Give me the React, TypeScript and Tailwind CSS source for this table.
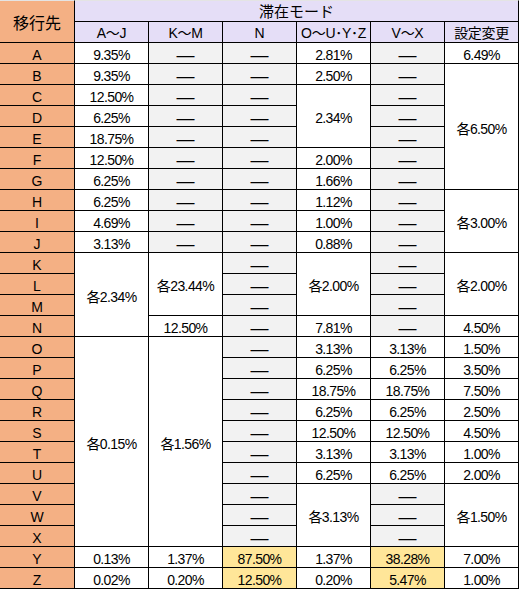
import React from 'react';

type Cell = { text: string; span?: number; tone?: 'dash' | 'hot' };

const DASH: Cell = { text: '—', tone: 'dash' };
const dashes = (n: number): Cell[] => Array.from({ length: n }, () => DASH);
const v = (text: string, span = 1): Cell => ({ text, span });
const hot = (text: string): Cell => ({ text, tone: 'hot' });

const LETTERS = 'ABCDEFGHIJKLMNOPQRSTUVWXYZ'.split('');

const HEADS = ['A～J', 'K～M', 'N', 'O～U･Y･Z', 'V～X', '設定変更'];

// one list per column, each entry covers `span` rows
const COLUMNS: Cell[][] = [
  [
    v('9.35%'), v('9.35%'), v('12.50%'), v('6.25%'), v('18.75%'), v('12.50%'), v('6.25%'), v('6.25%'), v('4.69%'), v('3.13%'),
    v('各2.34%', 4), v('各0.15%', 10), v('0.13%'), v('0.02%'),
  ],
  [...dashes(10), v('各23.44%', 3), v('12.50%'), v('各1.56%', 10), v('1.37%'), v('0.20%')],
  [...dashes(24), hot('87.50%'), hot('12.50%')],
  [
    v('2.81%'), v('2.50%'), v('2.34%', 3), v('2.00%'), v('1.66%'), v('1.12%'), v('1.00%'), v('0.88%'),
    v('各2.00%', 3), v('7.81%'), v('3.13%'), v('6.25%'), v('18.75%'), v('6.25%'), v('12.50%'), v('3.13%'), v('6.25%'),
    v('各3.13%', 3), v('1.37%'), v('0.20%'),
  ],
  [
    ...dashes(14), v('3.13%'), v('6.25%'), v('18.75%'), v('6.25%'), v('12.50%'), v('3.13%'), v('6.25%'),
    ...dashes(3), hot('38.28%'), hot('5.47%'),
  ],
  [
    v('6.49%'), v('各6.50%', 6), v('各3.00%', 3), v('各2.00%', 3), v('4.50%'), v('1.50%'), v('3.50%'), v('7.50%'),
    v('2.50%'), v('4.50%'), v('1.00%'), v('2.00%'), v('各1.50%', 3), v('7.00%'), v('1.00%'),
  ],
];

// index cells by the row where they start
const starts: Record<number, Cell>[] = COLUMNS.map((col) => {
  const map: Record<number, Cell> = {};
  let r = 0;
  for (const c of col) {
    map[r] = c;
    r += c.span ?? 1;
  }
  return map;
});

const td = 'border-r border-b border-black p-0 text-center align-middle';

export default function App() {
  return (
    <div className="bg-white w-[519px] h-[589px] text-black font-['Liberation_Sans','Noto_Sans_CJK_JP',sans-serif]">
      <table className="table-fixed border-separate border-spacing-0 w-[519px]">
        <colgroup>
          <col className="w-[75px]" />
          <col className="w-[74px]" />
          <col className="w-[74px]" />
          <col className="w-[74px]" />
          <col className="w-[74px]" />
          <col className="w-[74px]" />
          <col className="w-[74px]" />
        </colgroup>
        <thead>
          <tr className="h-[22px]">
            <th rowSpan={2} className={`${td} border-t border-t-[#e4e4e4] bg-[#f4b084] font-normal text-[16px] font-['Noto_Sans_CJK_JP',sans-serif]`}>
              移行先
            </th>
            <th colSpan={6} className={`${td} border-t border-t-[#e4e4e4] bg-[#e5def7] font-normal text-[15px] leading-[18px] font-['Noto_Sans_CJK_JP',sans-serif]`}>
              滞在モード
            </th>
          </tr>
          <tr className="h-[21px]">
            {HEADS.map((h) => (
              <th key={h} className={`${td} bg-[#e5def7] font-normal text-[14px] leading-[16px] pt-[2px] tracking-[-0.3px]`}>
                {h}
              </th>
            ))}
          </tr>
        </thead>
        <tbody>
          {LETTERS.map((letter, r) => (
            <tr key={letter} className="h-[21px]">
              <td className={`${td} bg-[#f4b084] text-[14px] leading-[14px] pt-[4px]`}>{letter}</td>
              {starts.map((col, ci) => {
                const c = col[r];
                if (!c) return null;
                if (c.tone === 'dash') {
                  return (
                    <td key={ci} className={`${td} bg-[#f2f2f2] text-[18px] leading-[14px] pt-[4px]`}>
                      —
                    </td>
                  );
                }
                return (
                  <td
                    key={ci}
                    rowSpan={c.span ?? 1}
                    className={`${td} ${c.tone === 'hot' ? 'bg-[#ffe699]' : 'bg-white'} text-[14px] leading-[14px] pt-[4px] tracking-[-0.6px]`}
                  >
                    {c.text}
                  </td>
                );
              })}
            </tr>
          ))}
        </tbody>
      </table>
    </div>
  );
}
